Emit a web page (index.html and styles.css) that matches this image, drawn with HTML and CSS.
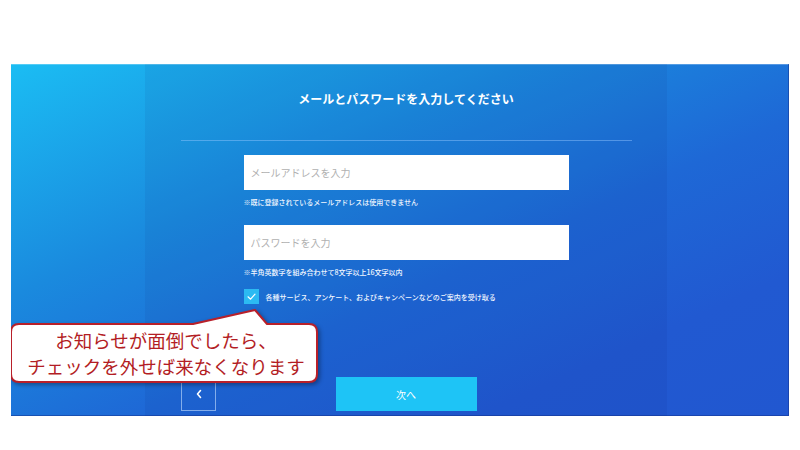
FILE: index.html
```html
<!DOCTYPE html>
<html lang="ja">
<head>
<meta charset="utf-8">
<title>メールとパスワードを入力してください</title>
<link rel="stylesheet" href="styles.css">
</head>
<body>
<div class="stage">
  <div class="side side-left"></div>
  <main class="panel">
    <h1 class="title">メールとパスワードを入力してください</h1>
    <div class="divider"></div>
    <form class="form">
      <input class="field" type="email" placeholder="メールアドレスを入力">
      <p class="note note-first">※既に登録されているメールアドレスは使用できません</p>
      <input class="field field-pass" type="password" placeholder="パスワードを入力">
      <p class="note">※半角英数字を組み合わせて8文字以上16文字以内</p>
      <label class="check-row">
        <span class="checkbox">
          <svg width="15" height="15" viewBox="0 0 15 15"><path d="M4 7.8 L6.6 10.2 L11 5.2" fill="none" stroke="#fff" stroke-width="1.2" stroke-linecap="round" stroke-linejoin="round"/></svg>
        </span>
        <span class="check-label">各種サービス、アンケート、およびキャンペーンなどのご案内を受け取る</span>
      </label>
    </form>
    <div class="actions">
      <button class="btn-back" type="button" aria-label="戻る">
        <svg width="8" height="10" viewBox="0 0 8 10"><polyline points="5.5,1.5 2.5,5 5.5,8.5" fill="none" stroke="#fff" stroke-width="1.6" stroke-linecap="round" stroke-linejoin="round"/></svg>
      </button>
      <button class="btn-next" type="button">次へ</button>
    </div>
  </main>
  <div class="side side-right"></div>

  <div class="callout">
    <svg class="callout-shape" width="310" height="76" viewBox="0 0 310 76">
      <path d="M9 16 L183 16 L245 2 L257 16 L299 16 Q307 16 307 24 L307 66 Q307 74 299 74 L9 74 Q1 74 1 66 L1 24 Q1 16 9 16 Z" fill="#fff" stroke="#b8202a" stroke-width="2" stroke-linejoin="round"/>
    </svg>
    <div class="callout-text">
      <span>お知らせが面倒でしたら、</span>
      <span>チェックを外せば来なくなります</span>
    </div>
  </div>
</div>
</body>
</html>
```

FILE: styles.css
```css
* { box-sizing: border-box; }

html, body {
  margin: 0;
  padding: 0;
  background: #ffffff;
}

body {
  font-family: "Noto Sans CJK JP", "Noto Sans", sans-serif;
  width: 800px;
  height: 450px;
  overflow: hidden;
  padding-top: 64px;
  padding-left: 11px;
}

.stage {
  position: relative;
  width: 778px;
  height: 352px;
  display: flex;
  background: linear-gradient(to bottom right, #1bbdf3 0%, #1a8ade 33%, #1e68d6 58%, #2159d1 80%, #2157d0 100%);
  box-shadow: inset -1px -1px 0 rgba(20, 50, 140, 0.5), inset 0 1px 0 rgba(255, 255, 255, 0.25);
  overflow: hidden;
}

.side-left { width: 134px; flex: none; }
.side-right { flex: 1; }

.panel {
  width: 522px;
  flex: none;
  background: rgba(10, 25, 110, 0.07);
  padding-top: 26px;
  display: flex;
  flex-direction: column;
}

.title {
  margin: 0;
  font-size: 12px;
  line-height: 18px;
  font-weight: 700;
  color: #ffffff;
  text-align: center;
}

.divider {
  height: 1px;
  margin: 32px 35px 0 36px;
  background: rgba(150, 200, 255, 0.45);
}

.form {
  width: 325px;
  margin: 14px auto 0;
  display: flex;
  flex-direction: column;
}

.field {
  display: block;
  width: 325px;
  height: 35px;
  border: none;
  outline: none;
  background: #ffffff;
  padding: 0 7px;
  font-family: "Noto Sans CJK JP", sans-serif;
  font-size: 10px;
  color: #333;
}

.field::placeholder { color: #b0b0b0; }

.field-pass { margin-top: 18px; }

.note {
  margin: 7px 0 0;
  font-size: 7px;
  line-height: 10px;
  font-weight: 500;
  color: #f2f7ff;
}

.check-row {
  margin-top: 12px;
  display: flex;
  align-items: center;
  gap: 7px;
}

.checkbox {
  width: 15px;
  height: 15px;
  flex: none;
  background: #2cbaf2;
  display: flex;
}

.check-label {
  font-size: 7px;
  line-height: 10px;
  font-weight: 500;
  color: #f2f7ff;
}

.actions {
  margin-top: 73px;
  position: relative;
  height: 34px;
  display: flex;
  justify-content: center;
}

.btn-back {
  position: absolute;
  left: 36px;
  top: 0;
  width: 35px;
  height: 34px;
  background: transparent;
  border: 1px solid rgba(200, 225, 255, 0.6);
  padding: 0;
  display: flex;
  align-items: center;
  justify-content: center;
}

.btn-next {
  width: 141px;
  height: 34px;
  border: none;
  background: #1ec4f6;
  color: #ffffff;
  font-family: "Noto Sans CJK JP", sans-serif;
  font-size: 10px;
  padding: 0;
}

.callout {
  position: absolute;
  left: -1px;
  top: 244px;
  width: 310px;
  height: 76px;
  padding-top: 16px;
}

.callout-shape {
  position: absolute;
  left: 0;
  top: 0;
  filter: drop-shadow(2px 2px 2px rgba(0, 0, 0, 0.35));
}

.callout-text {
  position: relative;
  height: 58px;
  display: flex;
  flex-direction: column;
  align-items: center;
  justify-content: center;
  font-size: 18.5px;
  line-height: 26px;
  color: #b31d24;
  padding-left: 2px;
}
```
